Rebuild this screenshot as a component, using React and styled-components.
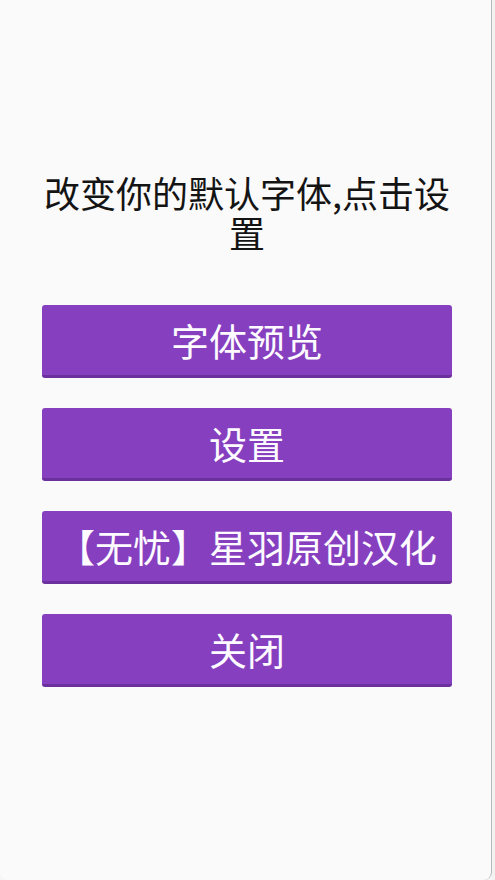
import React from "react";
import styled, { createGlobalStyle } from "styled-components";

const GlobalStyle = createGlobalStyle`
  html, body {
    margin: 0;
    padding: 0;
    background: #f4f4f4;
  }
  body {
    font-family: "Noto Sans CJK SC", "Noto Sans", sans-serif;
  }
`;

const Screen = styled.div`
  width: 495px;
  height: 880px;
  display: flex;
  background: #f6f6f6;
`;

const Dialog = styled.div`
  width: 492px;
  height: 880px;
  box-sizing: border-box;
  background: #fafafa;
  border-right: 1px solid #b9b9b9;
  border-radius: 0 0 8px 8px;
  padding: 172px 39px 0 42px;
  display: flex;
  flex-direction: column;
`;

const Edge = styled.div`
  flex: 1;
  background: #f2f2f2;
`;

const Title = styled.h1`
  margin: 0 0 53px;
  font-size: 36px;
  line-height: 40px;
  font-weight: 400;
  color: #141414;
  text-align: center;
`;

const Actions = styled.div`
  display: flex;
  flex-direction: column;
  gap: 30px;
`;

const Button = styled.button`
  height: 73px;
  width: 100%;
  box-sizing: border-box;
  border: none;
  border-bottom: 3px solid #6c2f9e;
  border-radius: 3px;
  background: #8640bf;
  color: #fdfbff;
  font-family: inherit;
  font-size: 38px;
  line-height: 1;
  padding: 0;
  white-space: nowrap;
  cursor: pointer;
`;

const items = ["字体预览", "设置", "【无忧】星羽原创汉化", "关闭"];

const App = () => {
  return (
    <Screen>
      <GlobalStyle />
      <Dialog>
        <Title>改变你的默认字体,点击设置</Title>
        <Actions>
          {items.map((label) => (
            <Button key={label}>{label}</Button>
          ))}
        </Actions>
      </Dialog>
      <Edge />
    </Screen>
  );
};

export default App;
